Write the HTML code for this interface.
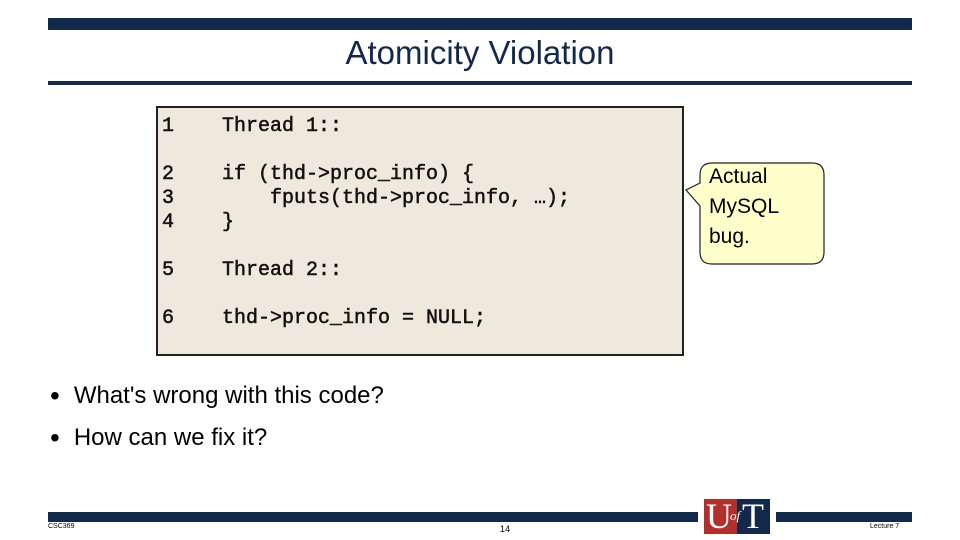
<!DOCTYPE html>
<html><head><meta charset="utf-8"><style>
*{margin:0;padding:0;box-sizing:border-box}
body{width:960px;height:540px;position:relative;background:#fff;font-family:"Liberation Sans",sans-serif;overflow:hidden}
.a{position:absolute}
.navy{background:#13294b}
.code{left:156px;top:106px;width:528px;height:250px;background:#eee8dd;border:2px solid #222;font-family:"Liberation Mono",monospace;font-size:20px;color:#111;-webkit-text-stroke:0.5px #111}
.code div{position:absolute;white-space:pre;line-height:24px}
</style></head><body>
<div class="a navy" style="left:48px;top:18px;width:864px;height:12px"></div>
<div class="a" style="left:0;top:34px;width:960px;text-align:center;font-size:33px;color:#13294b">Atomicity Violation</div>
<div class="a navy" style="left:48px;top:81px;width:864px;height:4px"></div>

<div class="a code">
<div style="left:4px;top:7px">1</div><div style="left:64px;top:7px">Thread 1::</div>
<div style="left:4px;top:55px">2</div><div style="left:64px;top:55px">if (thd-&gt;proc_info) {</div>
<div style="left:4px;top:79px">3</div><div style="left:64px;top:79px">    fputs(thd-&gt;proc_info, …);</div>
<div style="left:4px;top:103px">4</div><div style="left:64px;top:103px">}</div>
<div style="left:4px;top:151px">5</div><div style="left:64px;top:151px">Thread 2::</div>
<div style="left:4px;top:199px">6</div><div style="left:64px;top:199px">thd-&gt;proc_info = NULL;</div>
</div>

<svg class="a" style="left:680px;top:158px" width="150" height="110">
<path d="M32 5 H132 Q144 5 144 17 V94 Q144 106 132 106 H32 Q20 106 20 94 V48 L6 32 L20 25 V17 Q20 5 32 5 Z" fill="#ffffcc" stroke="#222" stroke-width="1.2"/>
</svg>
<div class="a" style="left:709px;top:162px;font-size:21px;line-height:30px;color:#000">Actual<br>MySQL<br>bug.</div>

<div class="a" style="left:50px;top:375px;font-size:24px;line-height:42px;color:#000">
<div><span style="font-size:28px;vertical-align:-2px">•</span><span style="margin-left:14px">What's wrong with this code?</span></div>
<div><span style="font-size:28px;vertical-align:-2px">•</span><span style="margin-left:14px">How can we fix it?</span></div>
</div>

<div class="a navy" style="left:48px;top:512px;width:650px;height:10px"></div>
<div class="a navy" style="left:776px;top:512px;width:136px;height:10px"></div>
<div class="a" style="left:704px;top:499px;width:33px;height:35px;background:#b1302c"></div>
<div class="a" style="left:737px;top:499px;width:33px;height:35px;background:#13294b"></div>
<div class="a" style="left:706px;top:497px;font-family:'Liberation Serif',serif;font-size:36px;color:#fff;line-height:38px">U</div>
<div class="a" style="left:730px;top:508px;font-family:'Liberation Serif',serif;font-style:italic;font-size:13px;color:#fff">of</div>
<div class="a" style="left:742px;top:497px;font-family:'Liberation Serif',serif;font-size:36px;color:#fff;line-height:38px">T</div>
<div class="a" style="left:48px;top:523px;font-size:7px;color:#000">CSC369</div>
<div class="a" style="left:500px;top:524px;font-size:9px;color:#000">14</div>
<div class="a" style="left:870px;top:523px;font-size:7px;color:#000">Lecture 7</div>
</body></html>
